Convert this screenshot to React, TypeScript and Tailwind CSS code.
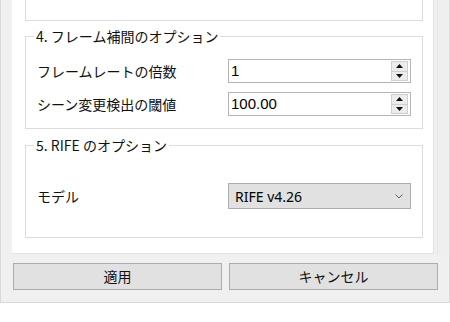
import type { ReactNode } from "react";

const jp = { fontFamily: '"Noto Sans CJK JP", "Noto Sans", sans-serif' };

function Group({ title, children, className }: { title: string; children: ReactNode; className?: string }) {
  return (
    <fieldset className={`m-0 border border-[#dcdcdc] p-0 ${className ?? ""}`}>
      <legend className="ml-[8px] px-[2px] text-[14px] leading-[20px] text-[#111]">{title}</legend>
      {children}
    </fieldset>
  );
}

function SpinBox({ value }: { value: string }) {
  return (
    <div className="flex h-[24px] w-[183px] items-center border border-[#b4b4b4] bg-white pl-[2px] pr-[2px]">
      <span className="flex-1 text-[15px] text-black" style={{ fontFamily: '"Liberation Sans", Arial, sans-serif' }}>
        {value}
      </span>
      <div className="flex h-[20px] w-[17px] flex-col">
        <div className="flex flex-1 items-center justify-center border border-[#cfcfcf] bg-[#ececec]">
          <svg width="7" height="4" viewBox="0 0 7 4">
            <path d="M0 4 L3.5 0 L7 4 Z" fill="#111" />
          </svg>
        </div>
        <div className="flex flex-1 items-center justify-center border border-t-0 border-[#cfcfcf] bg-[#ececec]">
          <svg width="7" height="4" viewBox="0 0 7 4">
            <path d="M0 0 L3.5 4 L7 0 Z" fill="#111" />
          </svg>
        </div>
      </div>
    </div>
  );
}

export default function App() {
  return (
    <div className="h-[322px] w-[450px] bg-white" style={jp}>
      <div className="flex h-[303px] w-[450px] flex-col border-x border-b border-[#d9d9d9] bg-[#f0f0f0]">
        {/* scroll area + scrollbar */}
        <div className="flex h-[254px]">
          <div className="ml-[11px] h-[254px] w-[422px] overflow-hidden border-r border-b border-[#e2e2e2] bg-white pl-[13px]">
            {/* cut-off group 3 */}
            <div className="h-[21px] w-[398px] border-x border-b border-[#dcdcdc]" />

            <Group title="4. フレーム補間のオプション" className="mt-[5px] w-[398px]">
              <div className="flex flex-col gap-[9px] pt-[13px] pb-[12px] pl-[11px]">
                <div className="flex items-center justify-between pr-[11px]">
                  <span className="text-[14px] text-[#111]">フレームレートの倍数</span>
                  <SpinBox value="1" />
                </div>
                <div className="flex items-center justify-between pr-[11px]">
                  <span className="text-[14px] text-[#111]">シーン変更検出の閾値</span>
                  <SpinBox value="100.00" />
                </div>
              </div>
            </Group>

            <Group title="5. RIFE のオプション" className="mt-[6px] w-[398px]">
              <div className="flex items-center justify-between pt-[28px] pb-[28px] pl-[11px] pr-[11px]">
                <span className="text-[14px] text-[#111]">モデル</span>
                <div className="flex h-[26px] w-[183px] items-center justify-between border border-[#adadad] bg-[#e1e1e1] pl-[6px] pr-[7px]">
                  <span className="text-[14px] text-black" style={{ fontFamily: '"Noto Sans", "Open Sans", sans-serif' }}>
                    RIFE v4.26
                  </span>
                  <svg width="8" height="5" viewBox="0 0 8 5">
                    <path d="M0.5 0.5 L4 4 L7.5 0.5" fill="none" stroke="#666" strokeWidth="1" />
                  </svg>
                </div>
              </div>
            </Group>
          </div>
          <div className="ml-[3px] flex-1 border-l border-[#e4e4e4] bg-[#efefef]" />
        </div>

        {/* buttons */}
        <div className="mt-[9px] flex gap-[7px] pl-[12px]">
          <button className="h-[27px] w-[209px] border border-[#adadad] bg-[#e1e1e1] text-[14px] text-[#111]">適用</button>
          <button className="h-[27px] w-[209px] border border-[#adadad] bg-[#e1e1e1] text-[14px] text-[#111]">キャンセル</button>
        </div>
      </div>
    </div>
  );
}
